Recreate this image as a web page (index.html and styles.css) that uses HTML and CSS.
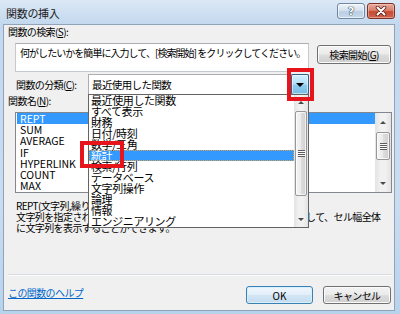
FILE: index.html
```html
<!DOCTYPE html>
<html lang="ja">
<head>
    <meta charset="UTF-8">
    <title>関数の挿入</title>
    <link rel="stylesheet" href="styles.css">
</head>
<body>
<div class="window">
    <div class="titlebar">
        <span class="title">関数の挿入</span>
        <div class="caption-buttons">
            <span class="cap-btn cap-help">?</span>
            <span class="cap-btn cap-close">
                <svg width="12" height="10" viewBox="0 0 12 10">
                    <path d="M2.5 1.5 L9.5 8.5 M9.5 1.5 L2.5 8.5" stroke="#5a2218" stroke-width="3.6" stroke-linecap="round"/>
                    <path d="M2.5 1.5 L9.5 8.5 M9.5 1.5 L2.5 8.5" stroke="#fff" stroke-width="2" stroke-linecap="round"/>
                </svg>
            </span>
        </div>
    </div>

    <div class="client">
        <div class="label">関数の検索(<u>S</u>):</div>
        <div class="search-row">
            <div class="search-box">何がしたいかを簡単に入力して、[検索開始] をクリックしてください。</div>
            <span class="btn btn-search">検索開始(<u>G</u>)</span>
        </div>

        <div class="category-row">
            <span class="label category-label">関数の分類(<u>C</u>):</span>
            <div class="combo">
                <span class="combo-text">最近使用した関数</span>
                <span class="combo-arrow"><span class="tri-down"></span></span>

                <!-- open dropdown list -->
                <div class="dropdown">
                    <ul class="dropdown-list">
                        <li>最近使用した関数</li>
                        <li>すべて表示</li>
                        <li>財務</li>
                        <li>日付/時刻</li>
                        <li>数学/三角</li>
                        <li class="selected">統計</li>
                        <li>検索/行列</li>
                        <li>データベース</li>
                        <li>文字列操作</li>
                        <li>論理</li>
                        <li>情報</li>
                        <li>エンジニアリング</li>
                    </ul>
                    <div class="scrollbar">
                        <div class="sb-btn"><span class="arrow-up"></span></div>
                        <div class="sb-track"><div class="sb-thumb thumb-dropdown"><span class="grip"></span></div></div>
                        <div class="sb-btn"><span class="arrow-down"></span></div>
                    </div>
                </div>
            </div>
        </div>

        <div class="label">関数名(<u>N</u>):</div>
        <div class="func-list">
            <ul class="func-items">
                <li class="selected">REPT</li>
                <li>SUM</li>
                <li>AVERAGE</li>
                <li>IF</li>
                <li>HYPERLINK</li>
                <li>COUNT</li>
                <li>MAX</li>
            </ul>
            <div class="scrollbar scrollbar-wide">
                <div class="sb-btn sb-btn-tall"><span class="arrow-up"></span></div>
                <div class="sb-track"><div class="sb-thumb thumb-func"><span class="grip"></span></div></div>
                <div class="sb-btn sb-btn-tall"><span class="arrow-down"></span></div>
            </div>
        </div>

        <div class="syntax">REPT(文字列,繰り返し回数)</div>
        <div class="desc">文字列を指定された回数だけ繰り返して表示します。この関数を使用して、セル幅全体<br>に文字列を表示することができます。</div>

        <div class="footer">
            <a class="help-link" href="#">この関数のヘルプ</a>
            <div class="footer-buttons">
                <span class="btn btn-default">OK</span>
                <span class="btn">キャンセル</span>
            </div>
        </div>
    </div>

    <!-- red annotation frames -->
    <div class="mark mark-arrow"></div>
    <div class="mark mark-item"></div>
</div>
</body>
</html>
```

FILE: styles.css
```css
* {
    box-sizing: border-box;
}

html, body {
    margin: 0;
    padding: 0;
}

body {
    width: 400px;
    height: 314px;
    overflow: hidden;
    font-family: "Noto Sans CJK JP", "Noto Sans", sans-serif;
    font-size: 10px;
    letter-spacing: -0.6px;
    color: #000;
    background: #c6daef;
}

.window {
    position: relative;
    width: 400px;
    height: 314px;
    padding: 0 5px 3px 3px;
    display: flex;
    flex-direction: column;
    background: linear-gradient(#dce8f5, #c3d8ee 24px, #c9ddf1 200px, #b7d3ec);
}

/* title bar */
.titlebar {
    height: 24px;
    display: flex;
    justify-content: space-between;
    align-items: flex-start;
}

.title {
    margin: 7px 0 0 3px;
    font-size: 11px;
    line-height: 12px;
    letter-spacing: -0.3px;
    color: #1b1b1b;
}

.caption-buttons {
    display: flex;
    gap: 2px;
    margin-top: 3px;
}

.cap-btn {
    width: 28px;
    height: 16px;
    border-radius: 3px;
    display: flex;
    align-items: center;
    justify-content: center;
}

.cap-help {
    border: 1px solid #6f87a3;
    background: linear-gradient(#eef3f9, #d6e2ef 45%, #bccee3 55%, #c9d9ea);
    box-shadow: inset 0 0 0 1px rgba(255, 255, 255, 0.6);
    font-family: "DejaVu Sans", sans-serif;
    font-size: 11px;
    font-weight: bold;
    color: #fff;
    text-shadow: 0 0 1px #2e3f55, 0 0 1px #2e3f55, 0 0 1px #2e3f55;
}

.cap-close {
    border: 1px solid #7a3126;
    background: linear-gradient(#e8aa9c, #d9806d 45%, #c74a33 55%, #d0644c);
    box-shadow: inset 0 0 0 1px rgba(255, 220, 210, 0.45);
}

/* dialog body */
.client {
    flex: 1;
    display: flex;
    flex-direction: column;
    padding-top: 1px;
    background: #f0f0f0;
    border: 1px solid #8fa3ba;
}

.label {
    height: 12px;
    line-height: 12px;
    margin-left: 4px;
    white-space: nowrap;
}

.search-row {
    display: flex;
    align-items: flex-start;
    margin: 5px 0 0 11px;
}

.search-box {
    width: 294px;
    height: 29px;
    padding: 3px 4px;
    line-height: 12px;
    letter-spacing: -0.95px;
    background: #fff;
    border: 1px solid #c4c8cf;
    border-top-color: #abadb3;
    white-space: nowrap;
    overflow: hidden;
}

.btn {
    display: flex;
    align-items: center;
    justify-content: center;
    height: 18px;
    border: 1px solid #707070;
    border-radius: 3px;
    background: linear-gradient(#f3f3f3, #ebebeb 48%, #dddddd 52%, #cfcfcf);
    box-shadow: inset 0 0 0 1px #fbfbfb;
    white-space: nowrap;
}

.btn-search {
    width: 74px;
    height: 19px;
    margin: 2px 0 0 8px;
}

.btn-default {
    border-color: #3c7fb1;
    background: linear-gradient(#f0f7fc, #e2eef8 48%, #d2e5f4 52%, #c4dcef);
    box-shadow: inset 0 0 0 1px #d6f0fd;
    letter-spacing: 0;
}

.category-row {
    display: flex;
    align-items: center;
    margin: 2px 0 0 12px;
}

.category-label {
    width: 72px;
    margin-left: 0;
}

.combo {
    position: relative;
    width: 221px;
    height: 21px;
    display: flex;
    align-items: center;
    background: #fff;
    border: 1px solid #abadb3;
}

.combo-text {
    flex: 1;
    padding-left: 3px;
    font-size: 10.5px;
}

.combo-arrow {
    align-self: stretch;
    width: 18px;
    margin: -1px -1px -1px 0;
    display: flex;
    align-items: center;
    justify-content: center;
    border: 1px solid #2c628b;
    border-radius: 2px;
    background: linear-gradient(#d4eefc, #b1dff8 48%, #8ccbee 52%, #79bde6);
    box-shadow: inset 0 0 0 1px rgba(255, 255, 255, 0.5);
}

.tri-down {
    border-left: 4px solid transparent;
    border-right: 4px solid transparent;
    border-top: 4px solid #000;
}

/* open list of the category combo */
.dropdown {
    position: absolute;
    left: -1px;
    top: 19px;
    width: 221px;
    height: 134px;
    display: flex;
    background: #fff;
    border: 1px solid #646464;
}

.dropdown-list {
    flex: 1;
    list-style: none;
    margin: 0;
    padding: 0;
    font-size: 11px;
    line-height: 11px;
    letter-spacing: -0.4px;
}

.dropdown-list li {
    height: 11px;
    padding-left: 2px;
    white-space: nowrap;
}

.dropdown-list li.selected {
    background: #3399ff;
    color: #fff;
    outline: 1px dotted #e3a24a;
    outline-offset: -1px;
}

/* scrollbars */
.scrollbar {
    width: 14px;
    display: flex;
    flex-direction: column;
    background: linear-gradient(90deg, #e3e3e3, #f1f1f1 35%, #f1f1f1 65%, #e3e3e3);
}

.scrollbar-wide {
    width: 16px;
}

.sb-btn {
    height: 15px;
    display: flex;
    align-items: center;
    justify-content: center;
}

.sb-btn-tall {
    height: 18px;
}

.sb-track {
    flex: 1;
}

.sb-thumb {
    margin: 1px 1px 0;
    display: flex;
    align-items: center;
    justify-content: center;
    border: 1px solid #979797;
    border-radius: 2px;
    background: linear-gradient(90deg, #f4f4f4, #ececec 45%, #dcdcdc 55%, #d0d0d0);
    box-shadow: inset 0 0 0 1px rgba(255, 255, 255, 0.7);
}

.thumb-dropdown {
    height: 85px;
}

.thumb-func {
    height: 28px;
}

.grip {
    width: 7px;
    height: 7px;
    background: repeating-linear-gradient(#5c5c5c 0 1px, #fafafa 1px 2px);
}

.arrow-up {
    border-left: 3px solid transparent;
    border-right: 3px solid transparent;
    border-bottom: 3px solid #4a4a4a;
}

.arrow-down {
    border-left: 3px solid transparent;
    border-right: 3px solid transparent;
    border-top: 3px solid #4a4a4a;
}

/* function name list */
.func-list {
    display: flex;
    width: 377px;
    height: 81px;
    margin: 5px 0 0 11px;
    background: #fff;
    border: 1px solid #828790;
    overflow: hidden;
}

.func-items {
    flex: 1;
    list-style: none;
    margin: 0;
    padding: 0 0 0 1px;
    font-size: 10.5px;
    line-height: 11.2px;
    letter-spacing: 0;
}

.func-items li {
    height: 11.2px;
    padding-left: 3px;
}

.func-items li.selected {
    background: #3399ff;
    color: #fff;
}

.syntax {
    margin: 7px 0 0 12px;
    line-height: 11px;
}

.desc {
    margin-left: 12px;
    line-height: 11px;
    white-space: nowrap;
}

/* bottom row */
.footer {
    margin: auto 2px 0 4px;
    padding: 11px 1px 6px 0;
    display: flex;
    justify-content: space-between;
    align-items: flex-start;
    border-top: 1px solid #d8dde3;
    box-shadow: inset 0 1px 0 #fbfbfb;
}

.help-link {
    margin-top: 1px;
    line-height: 12px;
    color: #0066cc;
}

.footer-buttons {
    display: flex;
    gap: 10px;
}

.footer-buttons .btn {
    width: 67px;
}

.footer-buttons .btn + .btn {
    width: 68px;
}

/* red frames drawn over the screenshot */
.mark {
    position: absolute;
    border: 4px solid #e8141c;
}

.mark-arrow {
    left: 287px;
    top: 68px;
    width: 27px;
    height: 33px;
}

.mark-item {
    left: 80px;
    top: 141px;
    width: 44px;
    height: 27px;
}
```
